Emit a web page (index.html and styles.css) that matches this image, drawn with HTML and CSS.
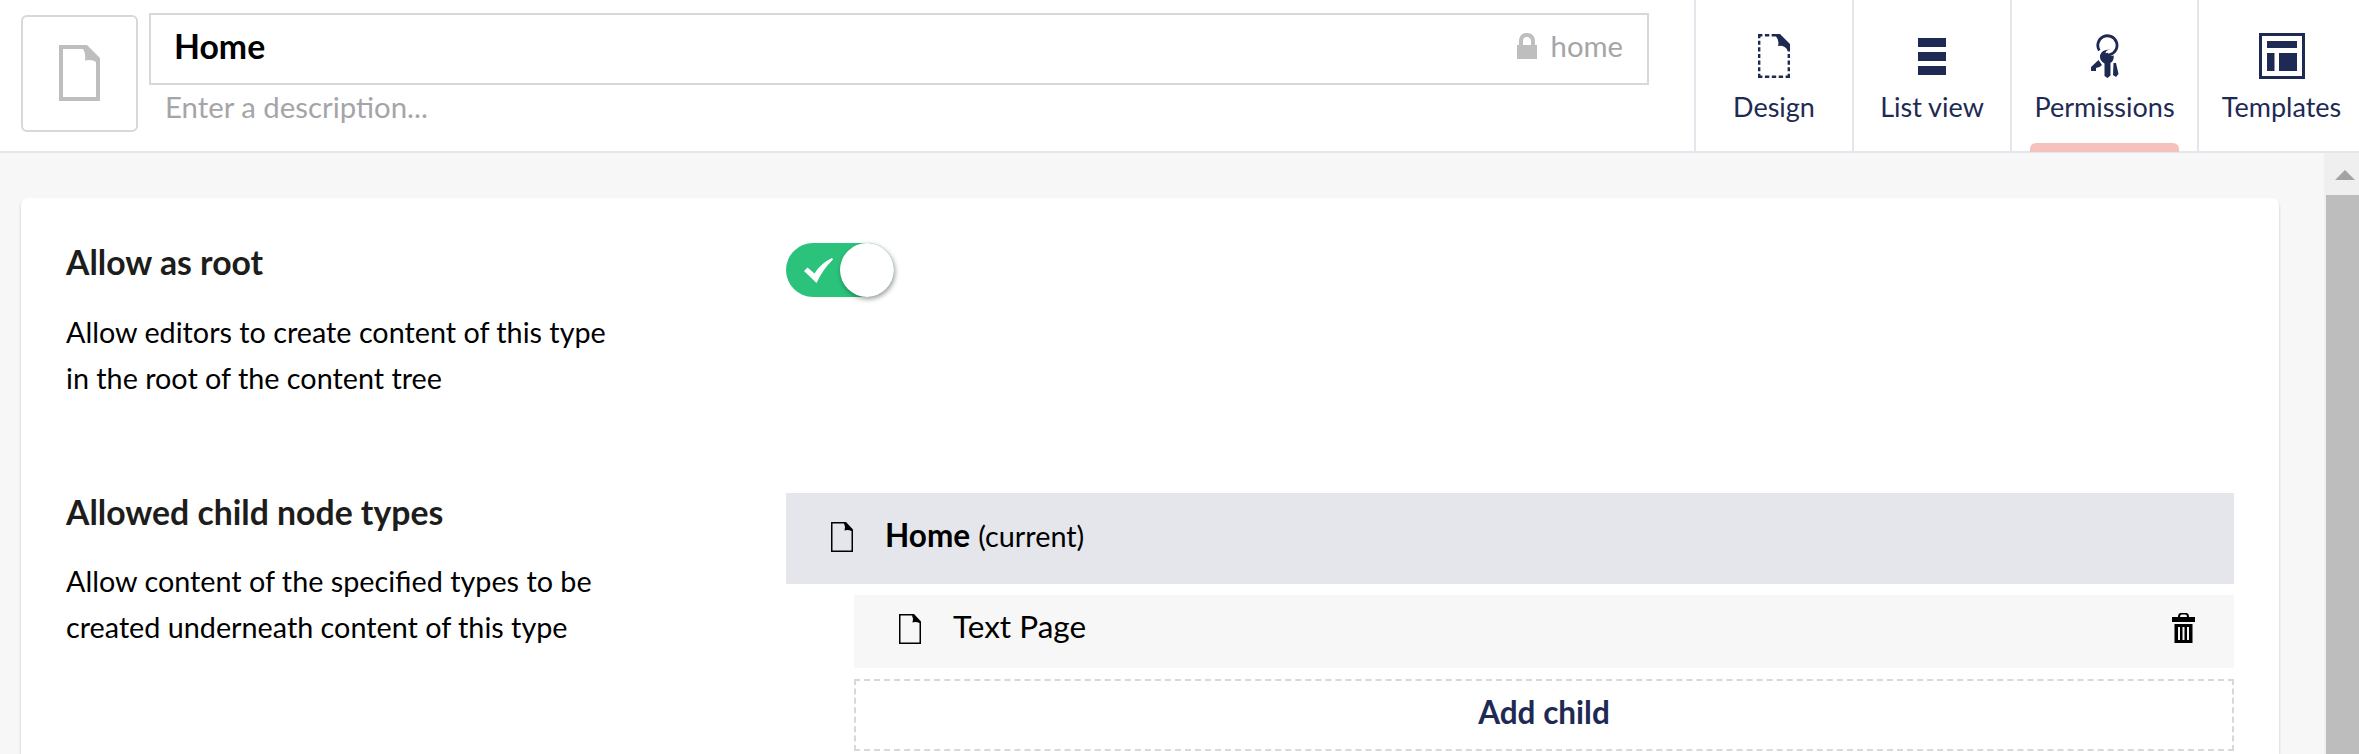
FILE: index.html
```html
<!DOCTYPE html>
<html lang="en">
<head>
<meta charset="utf-8">
<title>Home</title>
<link rel="stylesheet" href="styles.css">
</head>
<body>
<header class="header">
  <div class="identity">
    <button class="type-icon" aria-label="Icon">
      <svg width="41" height="56" viewBox="0 0 41 56"><path fill="#bebebe" fill-rule="evenodd" d="M0 0H28L41 13V56H0ZM4 4V52H37V17Q33 14 26 15.500Q27 8 24 4Z"/></svg>
    </button>
    <div class="names">
      <div class="name-box">
        <span class="name">Home</span>
        <span class="alias">
          <svg width="20" height="26" viewBox="0 0 20 26"><path fill="#bebebe" fill-rule="evenodd" d="M0 12H2V8.500C2 3 5 0 10 0S18 3 18 8.500V12H20V26H0ZM6 12H14V8.500C14 5.500 12.500 4 10 4S6 5.500 6 8.500Z"/></svg>
          <span>home</span>
        </span>
      </div>
      <div class="description">Enter a description...</div>
    </div>
  </div>
  <nav class="tabs">
    <a class="tab tab-design">
      <svg width="32" height="44" viewBox="0 0 32 44" fill="none" stroke="#1e2a54"><path stroke-width="2.400" d="M1.200 0V44M30.800 44V14" stroke-dasharray="4.200 2.430"/><path stroke-width="2.400" d="M0 42.800H32M0 1.200H14" stroke-dasharray="4.400 2.500"/><path fill="#1e2a54" stroke="none" d="M13.800 0H22L32 10V16.500H29.500Q27 11 20 12Q21.500 6 18 2.400H13.800Z"/></svg>
      <span>Design</span>
    </a>
    <a class="tab tab-list">
      <svg width="28" height="44" viewBox="0 0 28 44" fill="#1e2a54"><path d="M0 4H28V13H0ZM0 18H28V27H0ZM0 32H28V41H0Z"/></svg>
      <span>List view</span>
    </a>
    <a class="tab tab-permissions active">
      <svg width="28" height="44" viewBox="0 0 28 44" fill="#1e2a54"><path fill="none" stroke="#1e2a54" stroke-width="2.800" d="M8.300 16.500A9.600 9.600 0 1 1 19 20.600Q16 21.500 15.500 19"/><path d="M20 15.500Q15 15.500 14.500 19Q15 22.500 22.800 21.500Q23 27 19.500 29V41.500L16.500 44L13.500 42V29.500Q8.500 27 9 21.500Q10.500 15 20 15.500ZM7.500 26L11 31L8.500 33L5 34V37H0V33ZM22.500 29H25L27.500 40L25 43L22 41Z"/></svg>
      <span>Permissions</span>
    </a>
    <a class="tab tab-templates">
      <svg width="46" height="46" viewBox="0 0 46 46" fill="#1e2a54"><path fill-rule="evenodd" d="M0 0H46V46H0ZM3 3V43H43V3Z"/><path d="M8 8H38V15H8ZM8 20H15.500V38H8ZM20 20H38V38H20Z"/></svg>
      <span>Templates</span>
    </a>
  </nav>
</header>
<main class="body">
  <section class="card">
    <div class="row row-root">
      <div class="label">
        <h2>Allow as root</h2>
        <p>Allow editors to create content of this type<br>in the root of the content tree</p>
      </div>
      <div class="control">
        <div class="toggle">
          <svg width="29" height="25" viewBox="0 0 29 25"><path fill="#fff" d="M0 13L3.500 9.500L10.500 15.500Q17 5 28 0L29 1.500Q19 11 12.500 25Z"/></svg>
          <span class="knob"></span>
        </div>
      </div>
    </div>
    <div class="row row-children">
      <div class="label">
        <h2>Allowed child node types</h2>
        <p>Allow content of the specified types to be<br>created underneath content of this type</p>
      </div>
      <div class="control">
        <div class="node current">
          <svg width="22" height="30" viewBox="0 0 22 30"><path fill-rule="evenodd" d="M0 0H15L22 7.500V30H0ZM1.500 1.500V28.500H20.500V9Q17 7.500 13.500 8.500Q14.500 4 13 1.500Z"/></svg>
          <span class="node-name"><b>Home</b> <small>(current)</small></span>
        </div>
        <div class="node child">
          <svg width="22" height="30" viewBox="0 0 22 30"><path fill-rule="evenodd" d="M0 0H15L22 7.500V30H0ZM1.500 1.500V28.500H20.500V9Q17 7.500 13.500 8.500Q14.500 4 13 1.500Z"/></svg>
          <span class="node-name">Text Page</span>
          <svg class="trash" width="23" height="30" viewBox="0 0 23 30"><path fill-rule="evenodd" d="M0 4H6Q6 0 9 0H14Q17 0 17 4H23V9H0ZM8 4H15Q15 1.500 13.500 1.500H9.500Q8 1.500 8 4ZM2.500 11H20.500V30H2.500ZM6 14V27H8V14ZM10.500 14V27H12.500V14ZM15 14V27H17V14Z"/></svg>
        </div>
        <div class="add-child">Add child</div>
      </div>
    </div>
  </section>
  <div class="scrollbar"><svg class="arrow" width="20" height="10" viewBox="0 0 20 10"><path fill="#a3a3a3" d="M10 0L20 10H0Z"/></svg><div class="thumb"></div></div>
</main>
</body>
</html>
```
FILE: styles.css
```css
* { box-sizing: border-box; }
body { margin: 0; width: 2359px; height: 754px; overflow: hidden; display: flex; flex-direction: column; font-family: Lato, sans-serif; color: #000; background: #f7f7f7; }
svg { display: block; flex: none; }
.header { height: 153px; flex: none; display: flex; background: #fff; border-bottom: 2px solid #e5e6eb; }
.identity { display: flex; width: 1694px; padding-left: 21px; gap: 11px; flex: none; }
.type-icon { width: 117px; height: 117px; margin-top: 15px; padding: 0 0 1px; border: 2px solid #d8d7d9; border-radius: 6px; background: #fff; display: flex; justify-content: center; align-items: center; }
.names { width: 1500px; padding-top: 13px; }
.name-box { height: 72px; border: 2px solid #d8d7d9; padding: 0 24px 6px 23px; display: flex; align-items: center; justify-content: space-between; }
.name { font-size: 33.75px; font-weight: 700; line-height: 45px; }
.alias { display: flex; align-items: center; gap: 14px; font-size: 29.25px; line-height: 45px; color: #a5a5a9; }
.alias span { margin-top: -2px; }
.description { padding-left: 16px; font-size: 29.35px; line-height: 44px; color: #a5a5a9; }
.tabs { display: flex; flex: none; }
.tab { position: relative; flex: none; height: 151px; border-left: 2px solid #e5e6eb; padding-top: 34px; display: flex; flex-direction: column; align-items: center; font-size: 27px; line-height: 34px; color: #1e2a54; }
.tab span { margin-top: 12px; }
.tab-design, .tab-list { width: 158px; }
.tab-permissions { width: 187px; }
.tab-templates { width: 167px; padding-top: 33px; }
.tab-templates span { margin-top: 11px; }
.active::after { content: ""; position: absolute; left: 18px; bottom: -1px; width: 149px; height: 9px; border-radius: 6px 6px 0 0; background: #f5c1bc; }
.body { flex: 1; display: flex; justify-content: space-between; padding-left: 21px; min-height: 0; overflow: hidden; }
.card { width: 2258px; align-self: stretch; margin-top: 45px; padding: 45px 45px 0; background: #fff; border-radius: 7px 7px 0 0; box-shadow: 0 2px 3px rgba(0,0,0,.2); }
.row { display: flex; }
.row-root { height: 250px; }
.label { width: 720px; flex: none; }
.label h2 { margin: -3px 0 0; font-size: 33.75px; line-height: 45px; font-weight: 700; color: #1d1d1b; }
.label p { margin: 24px 0 0; font-size: 28.75px; line-height: 46px; }
.row-children p { margin-top: 23px; }
.control { flex: 1; }
.toggle { width: 108px; height: 54px; border-radius: 27px; background: #2bc37c; display: flex; align-items: center; justify-content: space-between; padding-left: 18px; }
.knob { width: 54px; height: 54px; border-radius: 50%; background: #fff; box-shadow: 1px 2px 5px rgba(0,0,0,.4); }
.node { display: flex; align-items: center; }
.current { height: 91px; padding: 0 45px 3px; background: #e5e6eb; gap: 32px; }
.child { height: 73px; margin: 11px 0 0 68px; padding: 0 39px 5px 45px; background: #f7f7f7; gap: 32px; }
.node-name { margin-top: -7px; font-size: 31.5px; }
.current .node-name { margin-top: -4px; }
.node-name small { font-size: 28.8px; }
.trash { margin: -2px 0 0 auto; }
.add-child { height: 72px; margin: 11px 0 0 68px; border: 2px dashed #d8d7d9; color: #1e2a54; font-size: 31.5px; font-weight: 700; line-height: 63px; text-align: center; }
.scrollbar { width: 35px; background: #efeff0; padding: 17px 0 0 2px; display: flex; flex-direction: column; }
.arrow { margin-left: 9px; }
.thumb { flex: 1; margin-top: 15px; background: #bdbdbd; }
```
